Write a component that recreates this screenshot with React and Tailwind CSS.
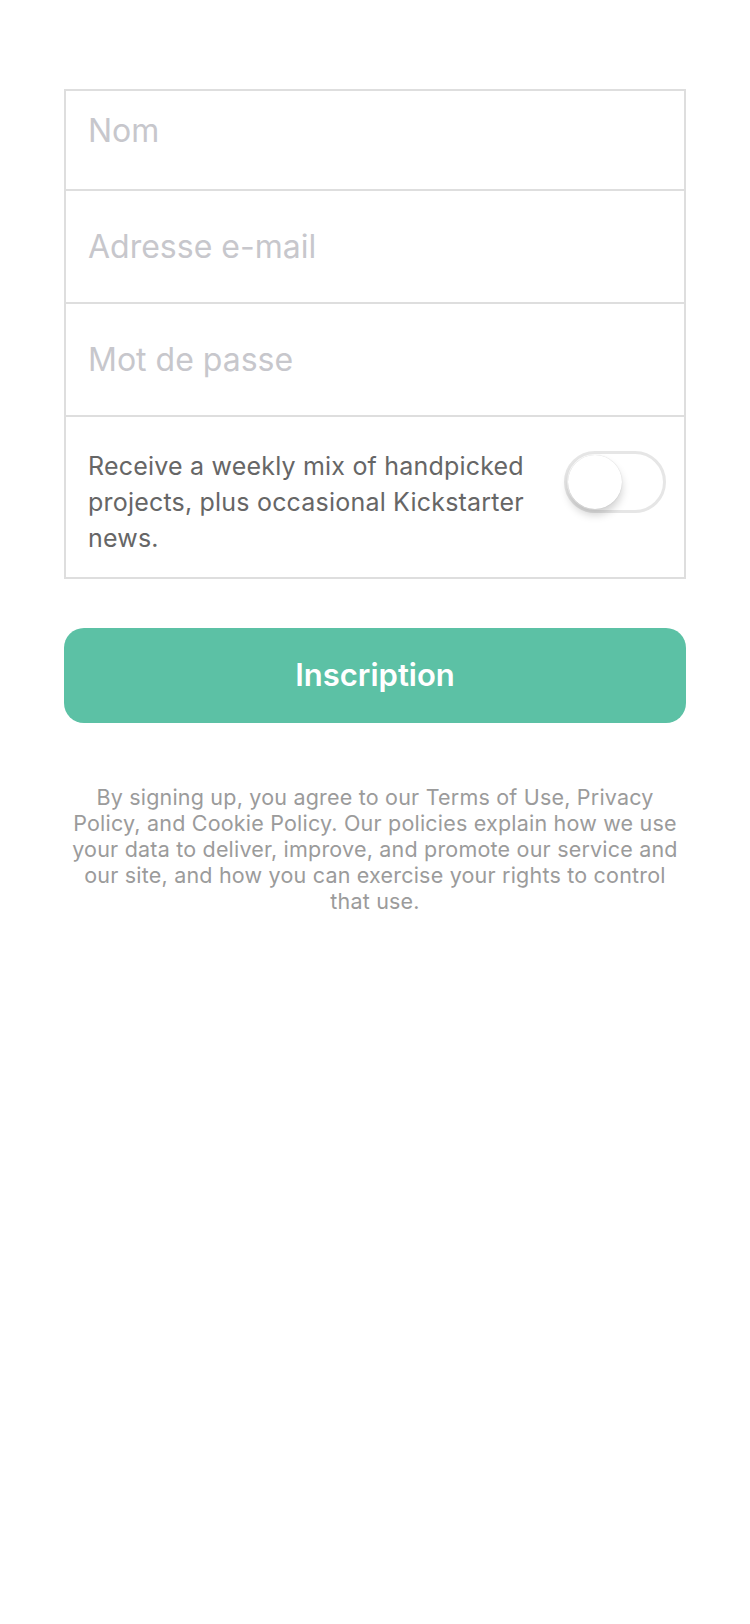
import { useState } from "react";

function Toggle() {
  const [on, setOn] = useState(false);
  return (
    <button
      onClick={() => setOn(!on)}
      className={`relative w-[102px] h-[62px] shrink-0 rounded-full border-[3px] ${on ? "bg-[#5cc1a5] border-[#5cc1a5]" : "bg-white border-[#e6e6e6]"}`}
    >
      <span
        className={`absolute top-[1px] ${on ? "left-[41px]" : "left-[1px]"} w-[54px] h-[54px] rounded-full bg-white shadow-[0_6px_8px_rgba(0,0,0,0.18),0_0_1px_rgba(0,0,0,0.2)]`}
      />
    </button>
  );
}

export default function App() {
  return (
    <div
      className="w-[750px] min-h-[1624px] bg-white px-[64px] pt-[89px]"
      style={{ fontFamily: "Inter, 'Noto Sans', sans-serif" }}
    >
      <div className="border-2 border-[#dedede]">
        <div className="h-[98px] flex items-center pb-[18px] px-[22px]">
          <input
            placeholder="Nom"
            className="w-full outline-none text-[32px] placeholder:text-[#c7c7cc]"
          />
        </div>
        <div className="h-[113px] border-t-2 border-[#dedede] flex items-center px-[22px]">
          <input
            placeholder="Adresse e-mail"
            className="w-full outline-none text-[32px] placeholder:text-[#c7c7cc]"
          />
        </div>
        <div className="h-[113px] border-t-2 border-[#dedede] flex items-center px-[22px]">
          <input
            type="password"
            placeholder="Mot de passe"
            className="w-full outline-none text-[32px] placeholder:text-[#c7c7cc]"
          />
        </div>
        <div className="h-[162px] border-t-2 border-[#dedede] flex items-start justify-between pl-[22px] pr-[18px] pt-[31px]">
          <p className="w-[446px] text-[25px] leading-[36px] tracking-[0.2px] text-[#666666]">
            Receive a weekly mix of handpicked projects, plus occasional Kickstarter news.
          </p>
          <div className="pt-[3px]">
            <Toggle />
          </div>
        </div>
      </div>

      <button className="mt-[49px] w-full h-[95px] rounded-[20px] bg-[#5cc1a5] text-white text-[31px] font-semibold">
        Inscription
      </button>

      <p className="mt-[61px] text-center text-[21.5px] leading-[26px] tracking-[0.2px] text-[#9b9b9b]">
        By signing up, you agree to our Terms of Use, Privacy Policy, and Cookie Policy. Our policies explain how we use your data to deliver, improve, and promote our service and our site, and how you can exercise your rights to control that use.
      </p>
    </div>
  );
}
